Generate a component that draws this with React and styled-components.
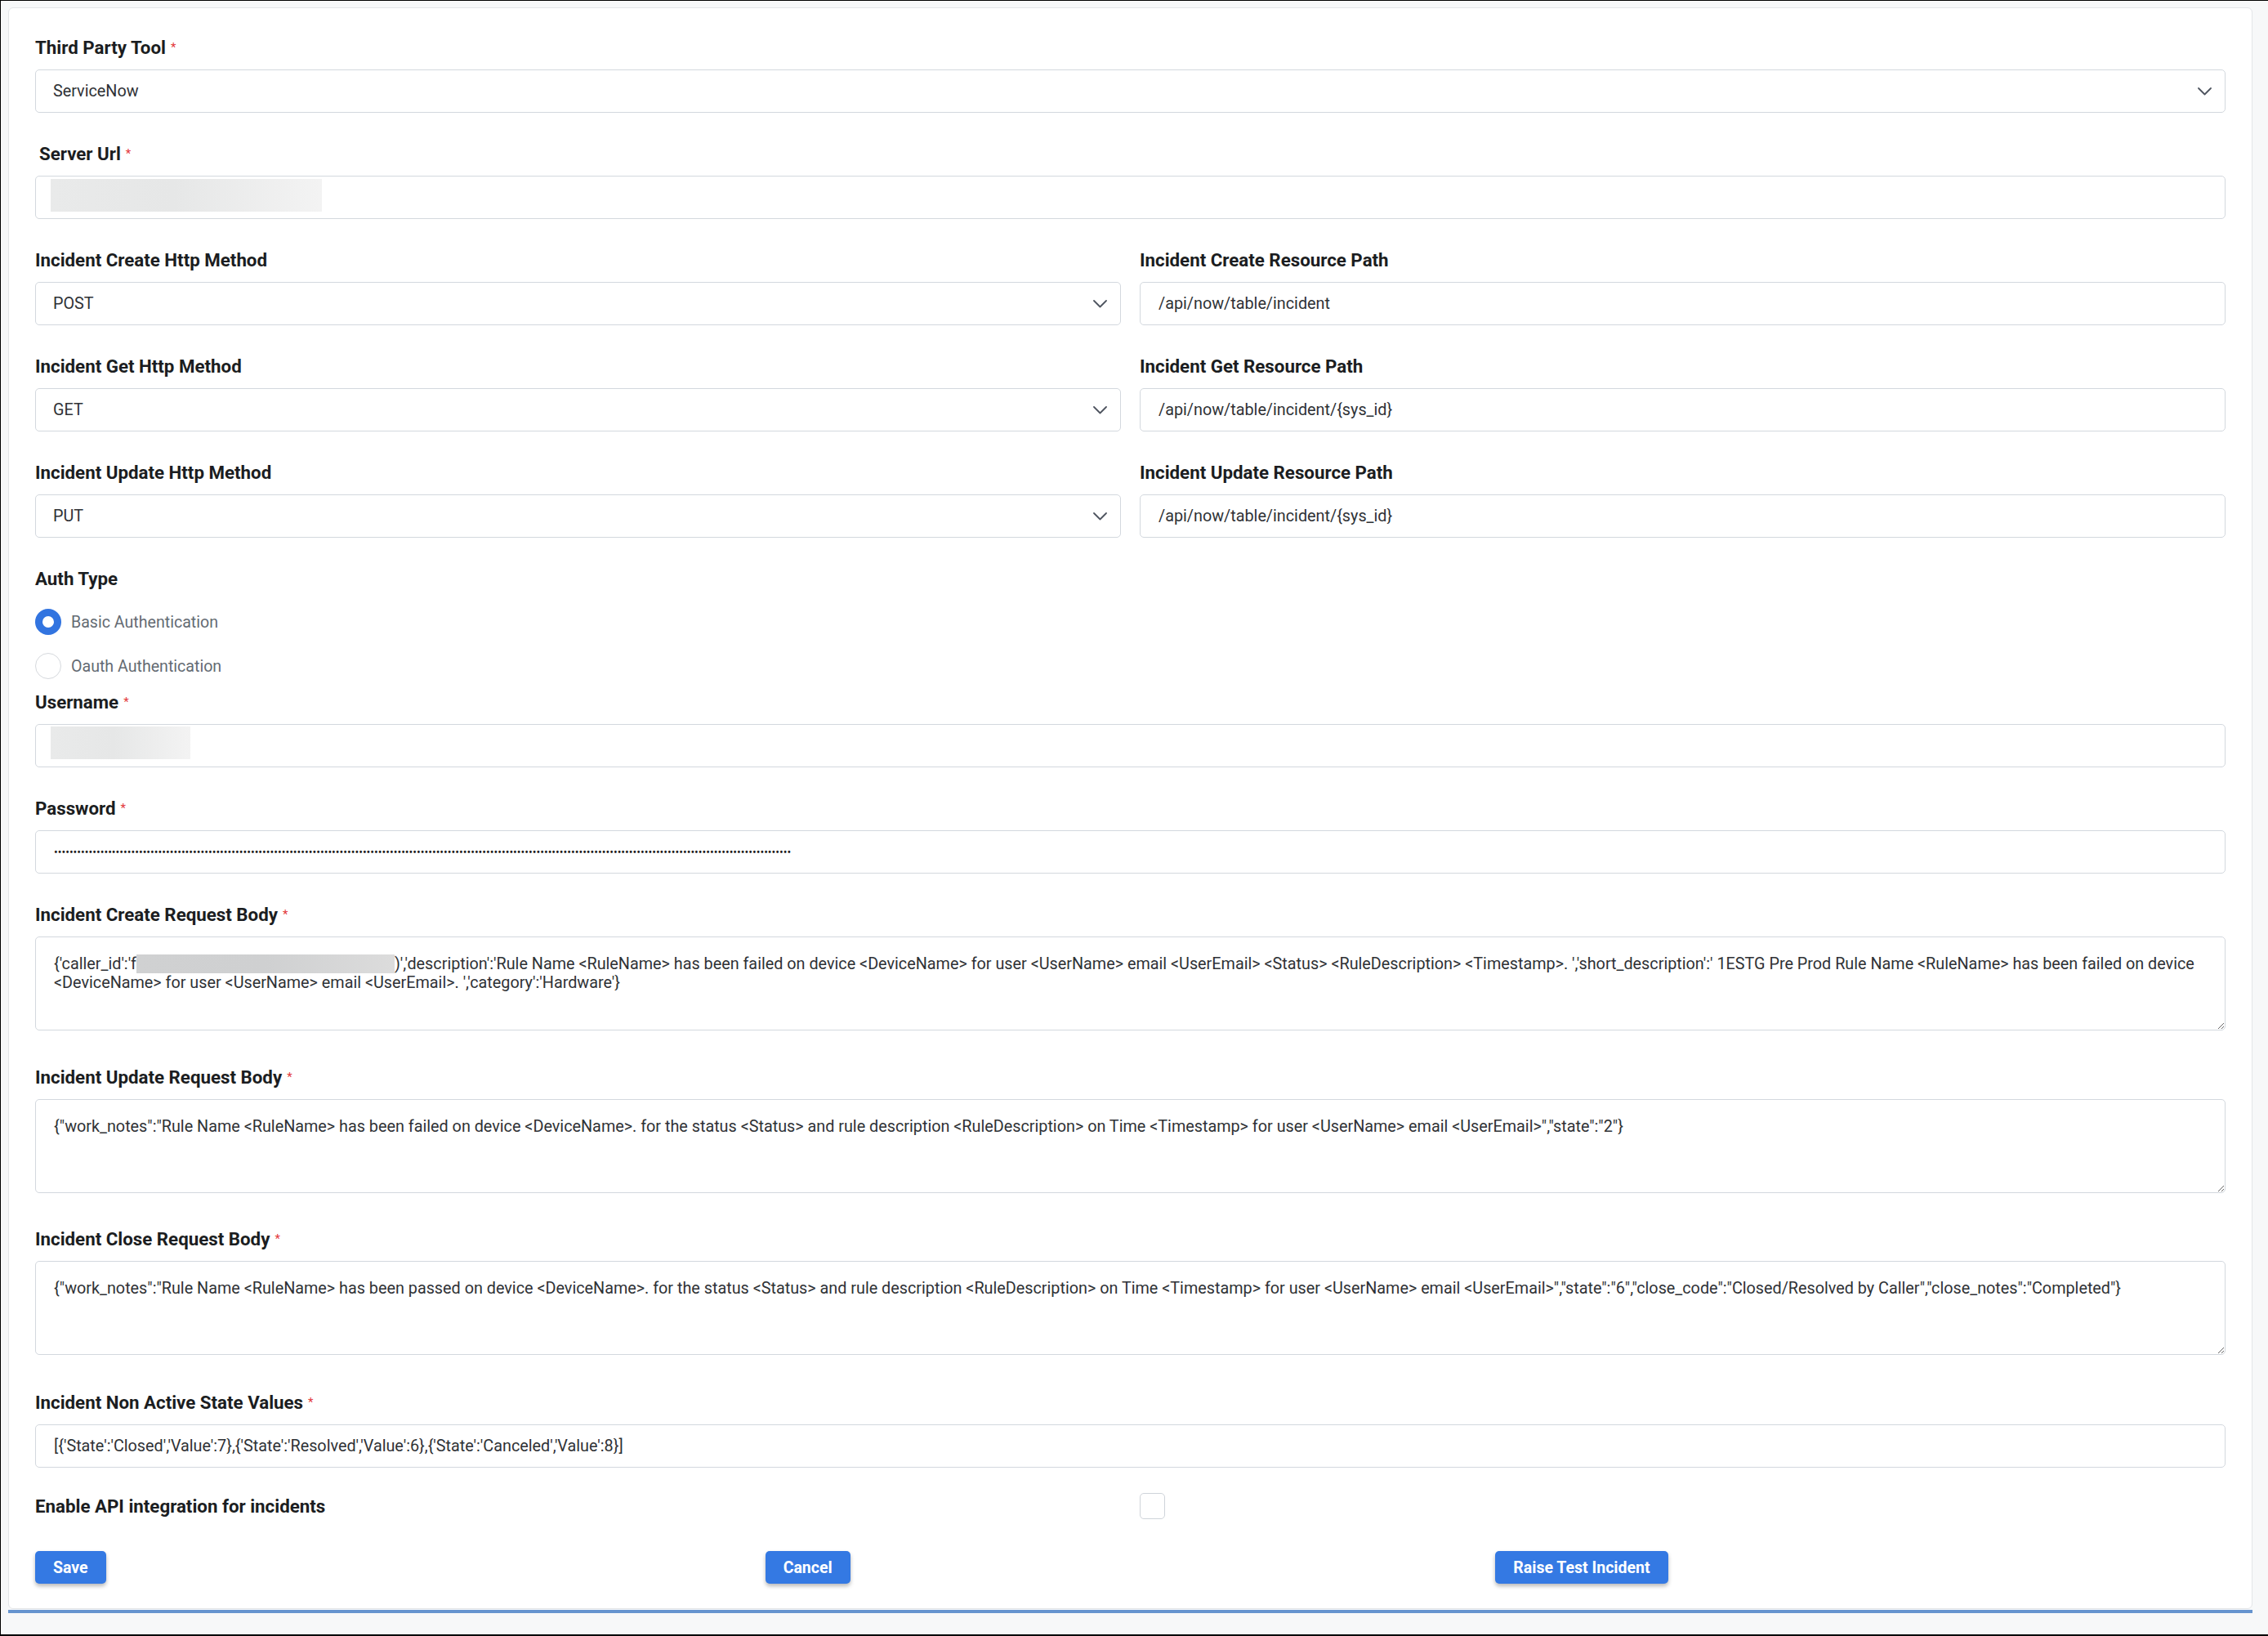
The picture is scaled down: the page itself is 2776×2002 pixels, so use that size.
import styled, { createGlobalStyle, css } from "styled-components";

const GlobalStyle = createGlobalStyle`
    html, body {
        margin: 0;
        padding: 0;
        overflow: hidden;
    }
    body {
        font-family: Roboto, "Liberation Sans", sans-serif;
        background: #f7f8f9;
    }
    * {
        box-sizing: border-box;
    }
`

const Chevron = () => (
    <svg width="17" height="10" viewBox="0 0 17 10" fill="none">
        <polyline points="1,1 8.5,8.5 16,1" stroke="#4f5560" strokeWidth="1.8" strokeLinecap="round" strokeLinejoin="round" />
    </svg>
)

const Field = ({ label, required, indent, gap, children }) => (
    <FieldWrapper $gap={gap}>
        <Label $indent={indent}>
            {label}
            {required && <Req>*</Req>}
        </Label>
        {children}
    </FieldWrapper>
)

const SelectField = ({ value, options }) => (
    <SelectWrapper>
        <Select defaultValue={value}>
            {options.map((o) => (
                <option key={o}>{o}</option>
            ))}
        </Select>
        <ChevronWrapper><Chevron /></ChevronWrapper>
    </SelectWrapper>
)

const createBodyTail =
    ")','description':'Rule Name <RuleName> has been failed on device <DeviceName> for user <UserName> email <UserEmail> <Status> <RuleDescription> <Timestamp>. ','short_description':' 1ESTG Pre Prod Rule Name <RuleName> has been failed on device\n<DeviceName> for user <UserName> email <UserEmail>. ','category':'Hardware'}"

const updateBody =
    '{"work_notes":"Rule Name <RuleName> has been failed on device <DeviceName>. for the status <Status> and rule description <RuleDescription> on Time <Timestamp> for user <UserName> email <UserEmail>","state":"2"}'

const closeBody =
    '{"work_notes":"Rule Name <RuleName> has been passed on device <DeviceName>. for the status <Status> and rule description <RuleDescription> on Time <Timestamp> for user <UserName> email <UserEmail>","state":"6","close_code":"Closed/Resolved by Caller","close_notes":"Completed"}'

const nonActiveStates =
    "[{'State':'Closed','Value':7},{'State':'Resolved','Value':6},{'State':'Canceled','Value':8}]"

const methods = ["GET", "POST", "PUT", "PATCH", "DELETE"]

const App = () => {
    return (
        <Page>
            <GlobalStyle />
            <Card>
                <Field label="Third Party Tool" required>
                    <SelectField value="ServiceNow" options={["ServiceNow", "Jira", "Zendesk"]} />
                </Field>

                <Field label="Server Url" required indent={5}>
                    <InputWrapper>
                        <Input defaultValue="" />
                        <Redacted $width={332} />
                    </InputWrapper>
                </Field>

                <TwoCols>
                    <Field label="Incident Create Http Method">
                        <SelectField value="POST" options={methods} />
                    </Field>
                    <Field label="Incident Create Resource Path">
                        <Input defaultValue="/api/now/table/incident" />
                    </Field>
                    <Field label="Incident Get Http Method">
                        <SelectField value="GET" options={methods} />
                    </Field>
                    <Field label="Incident Get Resource Path">
                        <Input defaultValue="/api/now/table/incident/{sys_id}" />
                    </Field>
                    <Field label="Incident Update Http Method">
                        <SelectField value="PUT" options={methods} />
                    </Field>
                    <Field label="Incident Update Resource Path">
                        <Input defaultValue="/api/now/table/incident/{sys_id}" />
                    </Field>
                </TwoCols>

                <Field label="Auth Type" gap={15}>
                    <RadioList>
                        <RadioRow>
                            <Radio type="radio" name="auth" defaultChecked />
                            Basic Authentication
                        </RadioRow>
                        <RadioRow>
                            <Radio type="radio" name="auth" />
                            Oauth Authentication
                        </RadioRow>
                    </RadioList>
                </Field>

                <Field label="Username" required>
                    <InputWrapper>
                        <Input defaultValue="" />
                        <Redacted $width={171} $top={3} />
                    </InputWrapper>
                </Field>

                <Field label="Password" required>
                    <PasswordInput type="password" defaultValue={"x".repeat(191)} />
                </Field>

                <Field label="Incident Create Request Body" required gap={44}>
                    <BodyBox>
                        {"{'caller_id':'f"}
                        <InlineRedacted />
                        {createBodyTail}
                    </BodyBox>
                </Field>

                <Field label="Incident Update Request Body" required gap={43}>
                    <TextArea defaultValue={updateBody} />
                </Field>

                <Field label="Incident Close Request Body" required gap={45}>
                    <TextArea defaultValue={closeBody} />
                </Field>

                <Field label="Incident Non Active State Values" required gap={31}>
                    <Input defaultValue={nonActiveStates} />
                </Field>

                <ToggleRow>
                    <Label as="span" $flat>Enable API integration for incidents</Label>
                    <Checkbox type="checkbox" />
                </ToggleRow>

                <ButtonRow>
                    <div><Button>Save</Button></div>
                    <div><Button>Cancel</Button></div>
                    <div><Button>Raise Test Incident</Button></div>
                </ButtonRow>
            </Card>
            <FooterRule />
        </Page>
    )
}

export default App;

const Page = styled.div`
    height: 100vh;
    border-top: 1px solid #000;
    border-left: 1px solid #000;
    border-bottom: 2px solid #000;
    padding: 8px 19px 0 9px;
    background: #f7f8f9;
`

const Card = styled.div`
    background: #fff;
    border: 1px solid #e3e5e8;
    border-radius: 6px;
    padding: 35px 32px 30px 32px;
`

const FooterRule = styled.div`
    height: 4px;
    margin-top: 1px;
    background: #6694cf;
`

const FieldWrapper = styled.div`
    margin-bottom: ${(p) => (p.$gap ?? 37)}px;
`

const Label = styled.label`
    display: block;
    font-size: 22.3px;
    line-height: 26px;
    font-weight: 700;
    color: #1b1d21;
    margin: 0 0 ${(p) => (p.$flat ? 0 : 14)}px ${(p) => p.$indent || 0}px;
`

const Req = styled.span`
    color: #e3393c;
    font-size: 15px;
    line-height: 26px;
    font-weight: 400;
    vertical-align: top;
    margin-left: 6px;
`

const fieldBox = css`
    width: 100%;
    border: 1px solid #d3d8de;
    border-radius: 5px;
    background: #fff;
    font-family: Roboto, "Liberation Sans", sans-serif;
    font-size: 19.8px;
    color: #2f3236;
    outline: none;
`

const Input = styled.input`
    ${fieldBox}
    display: block;
    height: 53px;
    padding: 0 22px;
`

const PasswordInput = styled(Input)`
    font-size: 14px;
    color: #1d1d1d;
`

const InputWrapper = styled.div`
    position: relative;
`

// grey placeholder block laid over values that are hidden
const Redacted = styled.span`
    position: absolute;
    left: 19px;
    top: ${(p) => p.$top ?? 4}px;
    width: ${(p) => p.$width}px;
    height: 40px;
    background: linear-gradient(90deg, #e9eaea 0%, #e6e7e7 45%, #f3f3f3 100%);
`

const InlineRedacted = styled.span`
    display: inline-block;
    width: 316px;
    height: 23px;
    vertical-align: -5px;
    background: linear-gradient(90deg, #d0d1d2 0%, #cfd0d1 50%, #dcdcdc 100%);
`

const SelectWrapper = styled.div`
    position: relative;
`

const Select = styled.select`
    ${fieldBox}
    display: block;
    height: 53px;
    padding: 0 50px 0 21px;
    appearance: none;
    -webkit-appearance: none;
`

const ChevronWrapper = styled.span`
    position: absolute;
    right: 17px;
    top: 50%;
    transform: translateY(-50%);
    display: flex;
    pointer-events: none;
`

const textBox = css`
    ${fieldBox}
    display: block;
    height: 115px;
    padding: 21px 22px;
    line-height: 23px;
    resize: vertical;
    overflow: auto;
`

const TextArea = styled.textarea`
    ${textBox}
`

const BodyBox = styled.div`
    ${textBox}
    white-space: pre-wrap;
`

const TwoCols = styled.div`
    display: grid;
    grid-template-columns: 1fr 1fr;
    column-gap: 23px;
`

const RadioList = styled.div`
    display: flex;
    flex-direction: column;
    gap: 22px;
    padding-top: 10px;
`

const RadioRow = styled.label`
    display: flex;
    align-items: center;
    gap: 12px;
    height: 32px;
    font-size: 19.6px;
    color: #646b73;
`

const Radio = styled.input`
    appearance: none;
    -webkit-appearance: none;
    margin: 0;
    width: 32px;
    height: 32px;
    border-radius: 50%;
    border: 1px solid #d6d9dd;
    background: #fff;

    &:checked {
        border: 9px solid #3274e0;
    }
`

const ToggleRow = styled.div`
    display: grid;
    grid-template-columns: 1fr 1fr;
    column-gap: 23px;
    align-items: center;
    margin-bottom: 39px;
`

const Checkbox = styled.input`
    appearance: none;
    -webkit-appearance: none;
    margin: 0;
    width: 31px;
    height: 32px;
    border: 1px solid #cfd4da;
    border-radius: 5px;
    background: #fff;
`

const ButtonRow = styled.div`
    display: grid;
    grid-template-columns: repeat(3, 1fr);
`

const Button = styled.button`
    height: 40px;
    padding: 0 22px;
    border: none;
    border-radius: 5px;
    background: #3479e3;
    color: #fff;
    font-family: Roboto, "Liberation Sans", sans-serif;
    font-size: 19.5px;
    font-weight: 700;
    box-shadow: 0 3px 5px rgba(0, 0, 0, 0.28);
    cursor: pointer;
`
